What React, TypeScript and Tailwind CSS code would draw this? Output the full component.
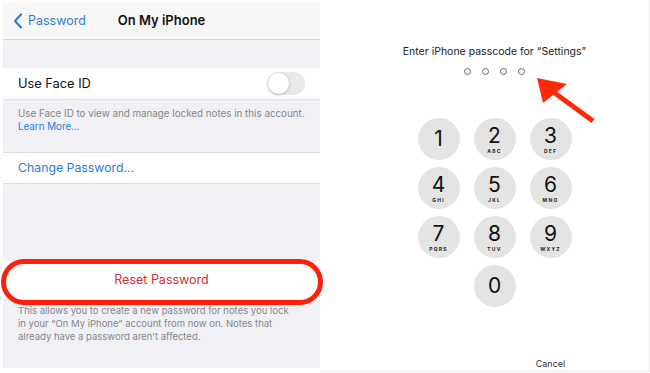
import React from 'react';

const keys = [
  { d: '1', l: '' },
  { d: '2', l: 'ABC' },
  { d: '3', l: 'DEF' },
  { d: '4', l: 'GHI' },
  { d: '5', l: 'JKL' },
  { d: '6', l: 'MNO' },
  { d: '7', l: 'PQRS' },
  { d: '8', l: 'TUV' },
  { d: '9', l: 'WXYZ' },
];

const Key: React.FC<{ d: string; l: string }> = ({ d, l }) => (
  <div className="w-[42px] h-[42px] rounded-full bg-[#e4e4e4] flex flex-col items-center justify-center">
    <div className={`text-[21px] leading-none text-[#111] ${l ? 'mt-[2px]' : ''}`}>{d}</div>
    {l && <div className="text-[5px] font-bold tracking-[1.2px] leading-none mt-[3px] text-[#222]">{l}</div>}
  </div>
);

export default function App() {
  return (
    <div className="relative w-[650px] h-[373px] bg-white flex overflow-hidden" style={{ fontFamily: 'Inter, "Liberation Sans", sans-serif' }}>
      {/* left: notes password settings */}
      <div className="ml-[3px] mt-[3px] w-[317px] h-[365px] bg-[#f0f0f5] flex flex-col">
        <div className="h-[37px] bg-[#f7f7f7] border-b border-[#d9d9dc] flex items-center relative">
          <div className="flex items-center pl-[10px] text-[#2c7dd8]">
            <svg width="10" height="16" viewBox="0 0 10 16" fill="none">
              <path d="M8 1.5 L2 8 L8 14.5" stroke="#2c7dd8" strokeWidth="2.2" strokeLinecap="round" strokeLinejoin="round" />
            </svg>
            <span className="ml-[5px] text-[12.5px]">Password</span>
          </div>
          <div className="absolute left-0 right-0 text-center text-[13px] font-semibold text-[#111] pointer-events-none">On My iPhone</div>
        </div>
        <div className="h-[28px]" />
        <div className="h-[32px] bg-white flex items-center justify-between pl-[15px] pr-[15px] border-b border-[#dedee2]">
          <span className="text-[12.8px] text-[#111]">Use Face ID</span>
          <div className="w-[38px] h-[23px] rounded-full bg-[#e9e9eb] relative">
            <div className="absolute left-[1px] top-[1px] w-[21px] h-[21px] rounded-full bg-white shadow-[0_1px_3px_rgba(0,0,0,0.25)]" />
          </div>
        </div>
        <div className="h-[52px] pl-[15px] pt-[7px] text-[9.8px] leading-[13px] text-[#86868b]">
          <div>Use Face ID to view and manage locked notes in this account.</div>
          <div className="text-[#2c7dd8]">Learn More...</div>
        </div>
        <div className="h-[32px] bg-white flex items-center pl-[15px] border-y border-[#dedee2]">
          <span className="text-[12.3px] text-[#2c7dd8]">Change Password...</span>
        </div>
        <div className="h-[77px]" />
        <div className="h-[38px] bg-white flex items-center justify-center">
          <span className="text-[12.5px] text-[#cf2f37]">Reset Password</span>
        </div>
        <div className="pl-[15px] pt-[5px] text-[9.5px] leading-[13px] text-[#86868b]">
          <div>This allows you to create a new password for notes you lock</div>
          <div>in your “On My iPhone” account from now on. Notes that</div>
          <div>already have a password aren’t affected.</div>
        </div>
      </div>

      {/* right: passcode keypad */}
      <div className="flex-1 flex flex-col items-center pl-[20px] border-r border-b border-[#ececec] mb-[1px]">
        <div className="mt-[44px] text-[10.5px] text-[#222]">Enter iPhone passcode for “Settings”</div>
        <div className="mt-[8px] flex gap-[11px]">
          {[0, 1, 2, 3].map((i) => (
            <div key={i} className="w-[7px] h-[7px] rounded-full border border-[#666]" />
          ))}
        </div>
        <div className="mt-[43px] grid grid-cols-3 gap-x-[14px] gap-y-[7px]">
          {keys.map((k) => (
            <Key key={k.d} d={k.d} l={k.l} />
          ))}
          <div />
          <Key d="0" l="" />
          <div />
        </div>
        <div className="mt-auto mb-[1px] ml-[112px] text-[9px] leading-[12px] text-[#333]">Cancel</div>
      </div>

      {/* annotations */}
      <div className="absolute left-[1px] top-[259px] w-[322px] h-[46px] rounded-full border-[5px] border-[#ff1f0a]" />
      <svg className="absolute left-0 top-0" width="650" height="373" viewBox="0 0 650 373">
        <line x1="593" y1="121" x2="552" y2="91" stroke="#ff2a0a" strokeWidth="5" />
        <polygon points="537,78 567,84 543,103" fill="#ff2a0a" />
      </svg>
    </div>
  );
}
